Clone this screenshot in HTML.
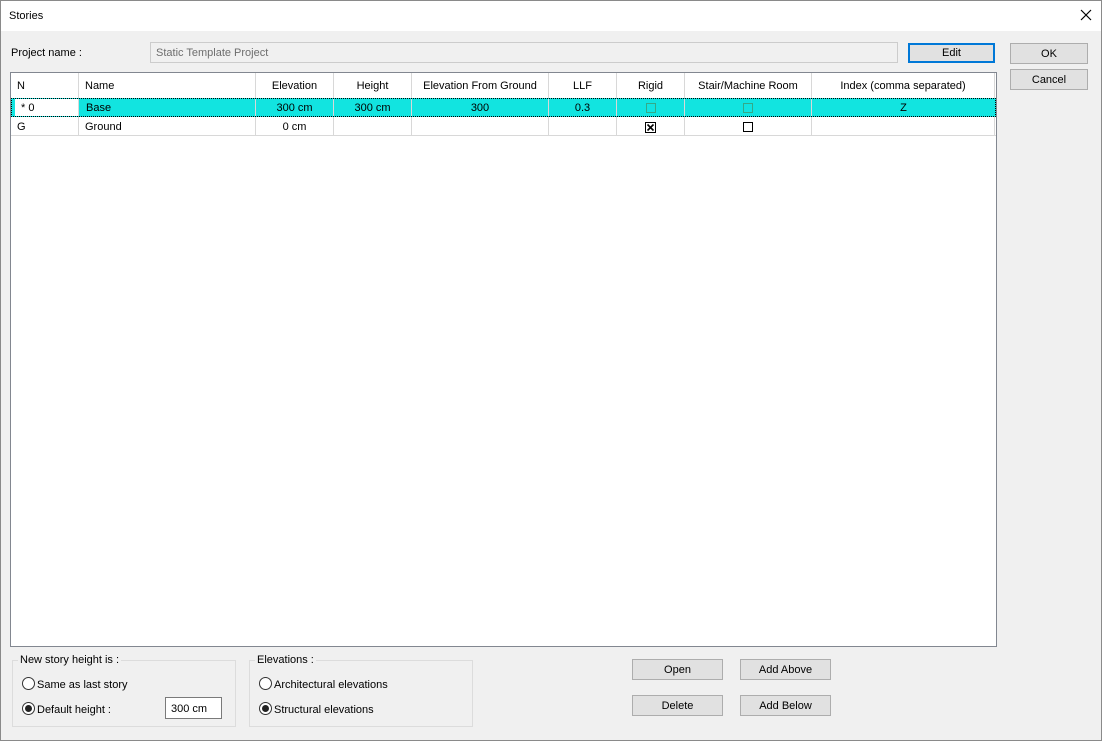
<!DOCTYPE html>
<html><head><style>
*{margin:0;padding:0;box-sizing:border-box}
body{width:1102px;height:741px;background:#f0f0f0;font-family:"Liberation Sans",sans-serif;font-size:11px;color:#000;position:relative;overflow:hidden}
.a{position:absolute}
.frame{position:absolute;left:0;top:0;width:1102px;height:741px;border:1px solid #8a8a8a;pointer-events:none}
.btn{position:absolute;background:#e1e1e1;border:1px solid #adadad;text-align:center;line-height:20px}
.cell{position:absolute;top:0;height:100%;border-right:1px solid #d8d8d8;white-space:nowrap;overflow:hidden}
.row{position:absolute;left:0;width:985px}
.chk{display:inline-block;width:10px;height:10px;border:1px solid #000;vertical-align:middle;background:#fff}
.radio{position:absolute;width:13px;height:13px;border:1px solid #333;border-radius:50%;background:#fff}
.radio.on::after{content:"";position:absolute;left:2px;top:2px;width:7px;height:7px;border-radius:50%;background:#222}
.grp{position:absolute;border:1px solid #dcdcdc}
.grp span{position:absolute;top:-7px;left:5px;background:#f0f0f0;padding:0 2px}
</style></head><body>
<div class="a" style="left:0;top:0;width:1102px;height:31px;background:#fff"></div>
<div class="a" style="left:9px;top:10px">Stories</div>
<svg class="a" style="left:1080px;top:9px" width="12" height="12"><path d="M1 1L11 11M11 1L1 11" stroke="#000" stroke-width="1.2"/></svg>
<div class="a" style="left:11px;top:47px">Project name :</div>
<div class="a" style="left:150px;top:42px;width:748px;height:21px;border:1px solid #ccc;background:#f0f0f0;color:#6d6d6d;padding:4px 5px">Static Template Project</div>
<div class="btn" style="left:908px;top:43px;width:87px;height:20px;border:2px solid #0078d7;line-height:17px">Edit</div>
<div class="btn" style="left:1010px;top:43px;width:78px;height:21px">OK</div>
<div class="btn" style="left:1010px;top:69px;width:78px;height:21px">Cancel</div>

<div class="a" style="left:10px;top:72px;width:987px;height:575px;background:#fff;border:1px solid #828790">
 <div class="row" style="top:0;height:25px;line-height:27px">
  <div class="cell" style="left:0;width:68px;padding-left:6px">N</div>
  <div class="cell" style="left:68px;width:177px;padding-left:6px">Name</div>
  <div class="cell" style="left:245px;width:78px;text-align:center">Elevation</div>
  <div class="cell" style="left:323px;width:78px;text-align:center">Height</div>
  <div class="cell" style="left:401px;width:137px;text-align:center">Elevation From Ground</div>
  <div class="cell" style="left:538px;width:68px;text-align:center">LLF</div>
  <div class="cell" style="left:606px;width:68px;text-align:center">Rigid</div>
  <div class="cell" style="left:674px;width:127px;text-align:center">Stair/Machine Room</div>
  <div class="cell" style="left:801px;width:183px;text-align:center">Index (comma separated)</div>
 </div>
 <div class="row" style="top:25px;height:19px;line-height:19px;background:#12e4e0;border:1px dotted #000">
  <div class="cell" style="left:0;width:67px;padding-left:6px;background:#fff;border-left:3px solid #12e4e0">* 0</div>
  <div class="cell" style="left:67px;width:177px;padding-left:7px">Base</div>
  <div class="cell" style="left:244px;width:78px;text-align:center">300 cm</div>
  <div class="cell" style="left:322px;width:78px;text-align:center">300 cm</div>
  <div class="cell" style="left:400px;width:137px;text-align:center">300</div>
  <div class="cell" style="left:537px;width:68px;text-align:center">0.3</div>
  <div class="cell" style="left:605px;width:68px;text-align:center"><span class="chk" style="border-color:#3a8;background:transparent"></span></div>
  <div class="cell" style="left:673px;width:127px;text-align:center"><span class="chk" style="border-color:#3a8;background:transparent"></span></div>
  <div class="cell" style="left:800px;width:183px;text-align:center;border:none">Z</div>
 </div>
 <div class="row" style="top:44px;height:19px;line-height:20px;border-bottom:1px solid #d8d8d8">
  <div class="cell" style="left:0;width:68px;padding-left:6px">G</div>
  <div class="cell" style="left:68px;width:177px;padding-left:6px">Ground</div>
  <div class="cell" style="left:245px;width:78px;text-align:center">0 cm</div>
  <div class="cell" style="left:323px;width:78px"></div>
  <div class="cell" style="left:401px;width:137px"></div>
  <div class="cell" style="left:538px;width:68px"></div>
  <div class="cell" style="left:606px;width:68px;text-align:center"><svg width="11" height="11" style="vertical-align:middle"><rect x="0.5" y="0.5" width="10" height="10" fill="#fff" stroke="#000"/><path d="M2.5 2.5L8.5 8.5M8.5 2.5L2.5 8.5" stroke="#000" stroke-width="1.6"/></svg></div>
  <div class="cell" style="left:674px;width:127px;text-align:center"><span class="chk"></span></div>
  <div class="cell" style="left:801px;width:183px"></div>
 </div>
</div>

<div class="grp" style="left:12px;top:660px;width:224px;height:67px"><span>New story height is :</span></div>
<div class="radio" style="left:22px;top:677px"></div><div class="a" style="left:37px;top:679px">Same as last story</div>
<div class="radio on" style="left:22px;top:702px"></div><div class="a" style="left:37px;top:704px">Default height :</div>
<div class="a" style="left:165px;top:697px;width:57px;height:22px;border:1px solid #7a7a7a;background:#fff;padding:5px 5px">300 cm</div>
<div class="grp" style="left:249px;top:660px;width:224px;height:67px"><span>Elevations :</span></div>
<div class="radio" style="left:259px;top:677px"></div><div class="a" style="left:274px;top:679px">Architectural elevations</div>
<div class="radio on" style="left:259px;top:702px"></div><div class="a" style="left:274px;top:704px">Structural elevations</div>

<div class="btn" style="left:632px;top:659px;width:91px;height:21px">Open</div>
<div class="btn" style="left:740px;top:659px;width:91px;height:21px">Add Above</div>
<div class="btn" style="left:632px;top:695px;width:91px;height:21px">Delete</div>
<div class="btn" style="left:740px;top:695px;width:91px;height:21px">Add Below</div>
<div class="frame"></div>
</body></html>
